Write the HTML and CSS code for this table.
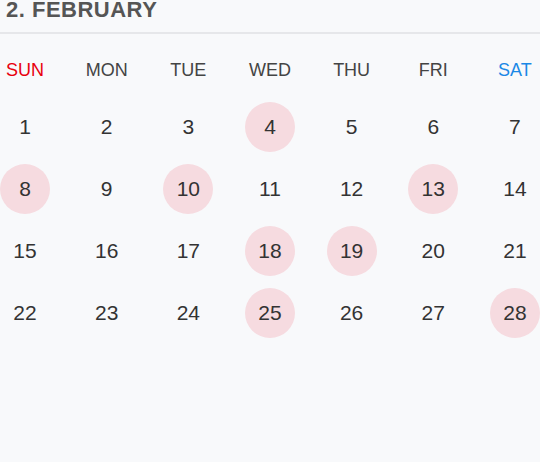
FILE: index.html
```html
<!DOCTYPE html>
<html>
<head>
<meta charset="utf-8">
<link rel="stylesheet" href="styles.css">
</head>
<body>
<div class="cal">
  <div class="title">2. FEBRUARY</div>
  <div class="grid">
    <div class="dow sun">SUN</div><div class="dow">MON</div><div class="dow">TUE</div><div class="dow">WED</div><div class="dow">THU</div><div class="dow">FRI</div><div class="dow sat">SAT</div>
    <div class="day">1</div><div class="day">2</div><div class="day">3</div><div class="day mark">4</div><div class="day">5</div><div class="day">6</div><div class="day">7</div>
    <div class="day mark">8</div><div class="day">9</div><div class="day mark">10</div><div class="day">11</div><div class="day">12</div><div class="day mark">13</div><div class="day">14</div>
    <div class="day">15</div><div class="day">16</div><div class="day">17</div><div class="day mark">18</div><div class="day mark">19</div><div class="day">20</div><div class="day">21</div>
    <div class="day">22</div><div class="day">23</div><div class="day">24</div><div class="day mark">25</div><div class="day">26</div><div class="day">27</div><div class="day mark">28</div>
  </div>
</div>
</body>
</html>
```
FILE: styles.css
```css
html, body {
  margin: 0;
  padding: 0;
  background: #f8f9fb;
  font-family: "Liberation Sans", Arial, sans-serif;
}
.cal {
  width: 540px;
}
.title {
  font-weight: bold;
  font-size: 22px;
  letter-spacing: 0.5px;
  color: #555;
  padding: 0 0 0 6px;
  height: 32px;
  line-height: 20px;
  border-bottom: 2px solid #e6e7ea;
}
.grid {
  display: grid;
  grid-template-columns: repeat(7, 50px);
  justify-content: space-between;
  row-gap: 12px;
  padding-top: 19px;
}
.dow {
  height: 34px;
  display: flex;
  align-items: center;
  justify-content: center;
  font-size: 18px;
  color: #444;
  margin-bottom: 3px;
}
.dow.sun { color: #e8000e; }
.dow.sat { color: #1a88e6; }
.day {
  width: 50px;
  height: 50px;
  border-radius: 50%;
  display: flex;
  align-items: center;
  justify-content: center;
  font-size: 21px;
  color: #333;
}
.day.mark {
  background: #f6dbe0;
}
```
